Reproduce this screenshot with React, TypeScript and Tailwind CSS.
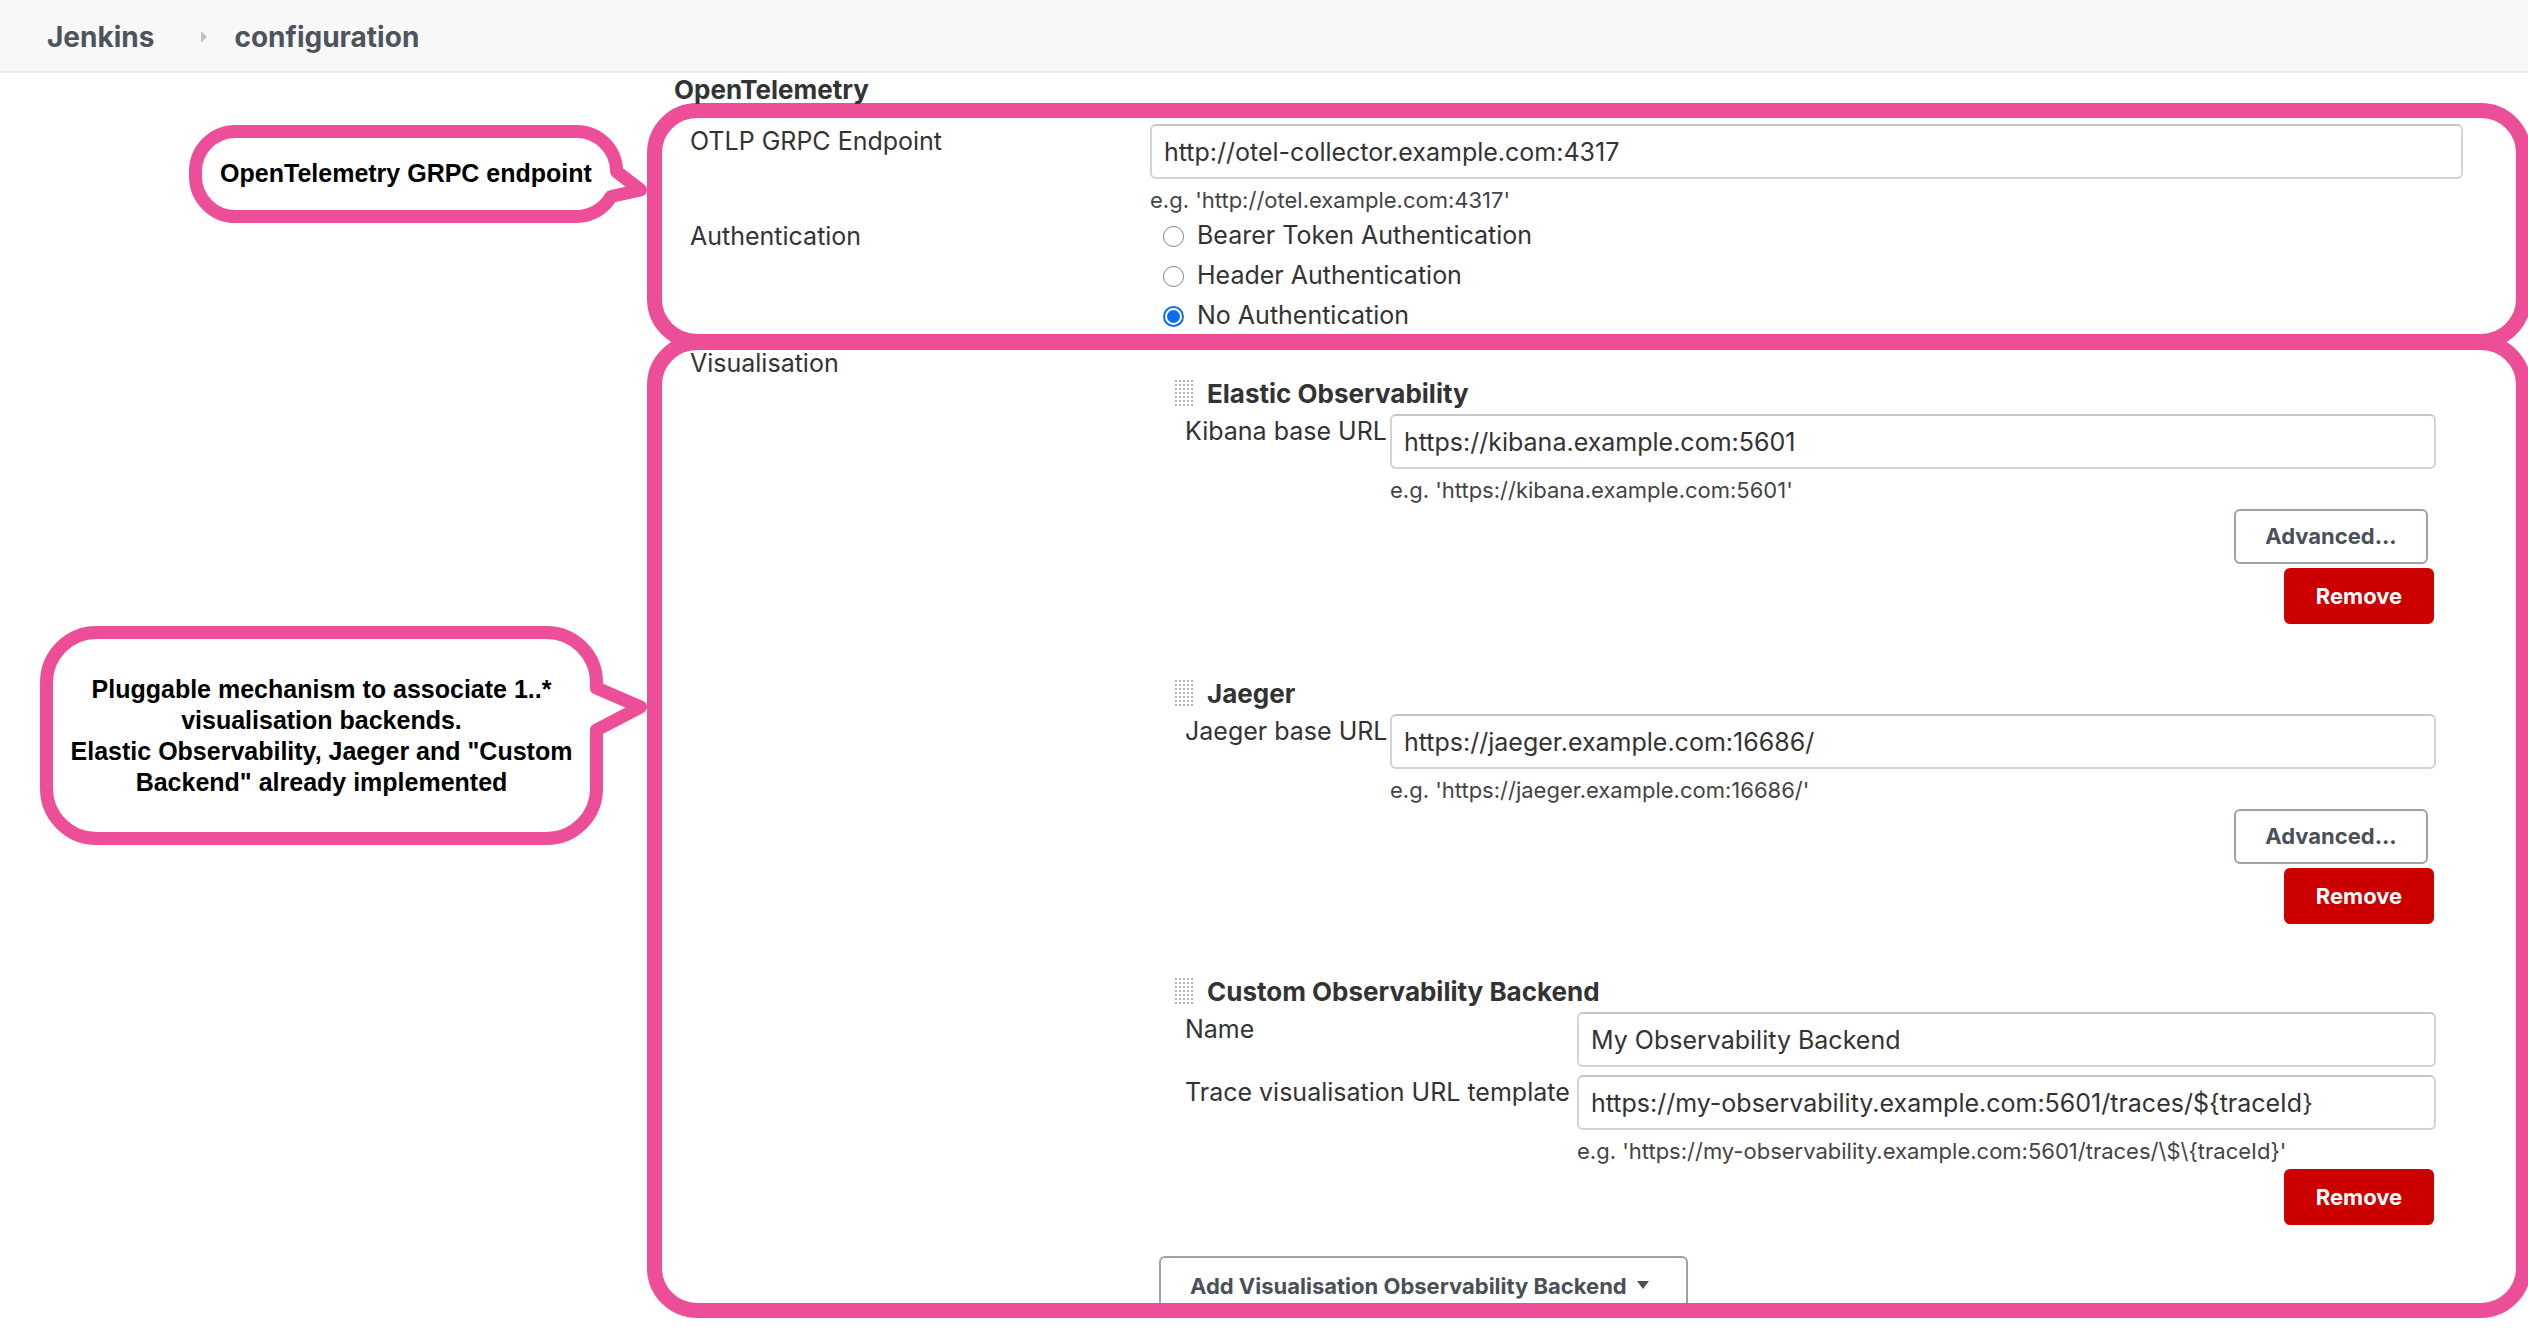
import React from "react";

const ui = { fontFamily: "Inter, 'Liberation Sans', sans-serif" };
const callFont = { fontFamily: "'Liberation Sans', Arial, sans-serif" };

function DragHandle() {
  return (
    <svg width="19" height="29" viewBox="0 0 19 29" className="shrink-0">
      <defs>
        <pattern id="dots" width="4" height="4" patternUnits="userSpaceOnUse">
          <rect x="1" y="1" width="2" height="2" fill="#b3b3b3" />
        </pattern>
      </defs>
      <rect x="0" y="0" width="19" height="29" fill="url(#dots)" />
    </svg>
  );
}

function Field({ value }: { value: string }) {
  return (
    <input
      readOnly
      value={value}
      className="h-[55px] w-full rounded-[6px] border-2 border-[#d3d3d3] border-t-[#c6c6c6] bg-white px-[12px] text-[25px] text-[#333] outline-none"
      style={ui}
    />
  );
}

function Radio({ label, checked }: { label: string; checked?: boolean }) {
  return (
    <div className="flex h-[40px] items-center gap-[13px] pl-[13px]">
      {checked ? (
        <span className="flex h-[21px] w-[21px] items-center justify-center rounded-full bg-[#0b6df2]">
          <span className="h-[17px] w-[17px] rounded-full border-2 border-white bg-[#0b6df2]" />
        </span>
      ) : (
        <span className="h-[21px] w-[21px] rounded-full border-[1.5px] border-[#7f7f7f] bg-white" />
      )}
      <span className="text-[25px] text-[#333]">{label}</span>
    </div>
  );
}

function AdvancedButton() {
  return (
    <button className="mr-[8px] mt-[5px] h-[55px] w-[194px] rounded-[6px] border-2 border-[#9aa3ab] bg-white text-[22px] font-bold text-[#4a5058]">
      Advanced...
    </button>
  );
}

function RemoveButton({ className }: { className: string }) {
  return (
    <button className={`mr-[2px] h-[56px] w-[150px] rounded-[6px] bg-[#cc0000] text-[22px] font-bold text-white ${className}`}>
      Remove
    </button>
  );
}

function Section({
  title,
  rows,
  help,
  labelW,
  advanced,
  className,
}: {
  title: string;
  rows: { label: string; value: string }[];
  help: string;
  labelW: string;
  advanced?: boolean;
  className: string;
}) {
  return (
    <div className={`ml-[24px] flex flex-col ${className}`}>
      <div className="flex h-[32px] items-center gap-[14px]">
        <DragHandle />
        <span className="text-[26px] font-bold text-[#333]">{title}</span>
      </div>
      <div className="mt-[5px] flex flex-col gap-[8px]">
        {rows.map((r) => (
          <div key={r.label} className="flex">
            <div className={`${labelW} shrink-0 whitespace-nowrap pl-[11px] pt-[1px] text-[25px] leading-[32px] text-[#333]`}>
              {r.label}
            </div>
            <Field value={r.value} />
          </div>
        ))}
      </div>
      <div className="flex">
        <div className={`${labelW} shrink-0`} />
        <div className="mt-[7px] text-[22px] leading-[28px] text-[#444]">{help}</div>
      </div>
      <div className="flex flex-col items-end">
        {advanced && <AdvancedButton />}
        <RemoveButton className={advanced ? "mt-[4px]" : "mt-[4px]"} />
      </div>
    </div>
  );
}

function Bubble1() {
  return (
    <div className="relative h-[98px] w-[458px]">
      <svg width="458" height="98" className="absolute inset-0">
        <path
          d="M46.5 6.5 H387.5 A40 40 0 0 1 427.5 46.5 L451.5 65 L422.1 71.5 A40 40 0 0 1 387.5 91.5 H46.5 A40 40 0 0 1 6.5 51.5 V46.5 A40 40 0 0 1 46.5 6.5 Z"
          fill="white"
          stroke="#ec4f97"
          strokeWidth="13"
          strokeLinejoin="round"
        />
      </svg>
      <div className="relative flex h-full w-[434px] items-center justify-center text-[25px] font-bold text-black" style={callFont}>
        OpenTelemetry GRPC endpoint
      </div>
    </div>
  );
}

function Bubble2() {
  return (
    <div className="relative h-[219px] w-[607px]">
      <svg width="607" height="219" className="absolute inset-0">
        <path
          d="M56.5 6.5 H506.5 A50 50 0 0 1 556.5 56.5 V62 L600.5 81 L556.5 104 V162.5 A50 50 0 0 1 506.5 212.5 H56.5 A50 50 0 0 1 6.5 162.5 V56.5 A50 50 0 0 1 56.5 6.5 Z"
          fill="white"
          stroke="#ec4f97"
          strokeWidth="13"
          strokeLinejoin="round"
        />
      </svg>
      <div
        className="relative flex h-full w-[563px] items-center justify-center text-center text-[25px] font-bold leading-[31px] text-black"
        style={callFont}
      >
        <p>
          Pluggable mechanism to associate 1..*
          <br />
          visualisation backends.
          <br />
          Elastic Observability, Jaeger and "Custom
          <br />
          Backend" already implemented
        </p>
      </div>
    </div>
  );
}

export default function App() {
  return (
    <div className="h-[1332px] w-[2528px] overflow-hidden bg-white" style={ui}>
      <header className="flex h-[73px] items-center border-b-2 border-[#e8eaed] bg-[#f8f8f8] pl-[47px] pt-[2px] text-[28px] font-bold text-[#4e545c]">
        <span>Jenkins</span>
        <svg width="8" height="14" viewBox="0 0 8 14" className="ml-[46px] mr-[26px]">
          <path d="M1 1 L7 7 L1 13 Z" fill="#c2c2c2" />
        </svg>
        <span>configuration</span>
      </header>

      <div className="flex">
        <div className="flex w-[647px] shrink-0 flex-col">
          <div className="ml-[189px] mt-[52px]">
            <Bubble1 />
          </div>
          <div className="ml-[40px] mt-[403px]">
            <Bubble2 />
          </div>
        </div>

        <div className="w-[1884px] shrink-0">
          <div className="h-[30px] pl-[27px] pt-[2px] text-[26px] font-bold leading-[30px] text-[#333]">OpenTelemetry</div>

          <div className="h-[246px] rounded-[50px] border-[15px] border-[#ec4f97]">
            <div className="grid grid-cols-[460px_1313px] pl-[28px] pt-[6px]">
              <div className="pt-[1px] text-[25px] leading-[32px] text-[#333]">OTLP GRPC Endpoint</div>
              <div className="flex flex-col">
                <Field value="http://otel-collector.example.com:4317" />
                <div className="mt-[7px] text-[22px] leading-[28px] text-[#444]">e.g. 'http://otel.example.com:4317'</div>
              </div>
              <div className="pt-[6px] text-[25px] leading-[32px] text-[#333]">Authentication</div>
              <div className="flex flex-col pt-[2px]">
                <Radio label="Bearer Token Authentication" />
                <Radio label="Header Authentication" />
                <Radio label="No Authentication" checked />
              </div>
            </div>
          </div>

          <div className="-mt-[14px] h-[983px] overflow-hidden rounded-[50px] border-[15px] border-[#ec4f97]">
            <div className="grid grid-cols-[460px_1286px] pl-[28px]">
              <div className="text-[25px] leading-[26px] text-[#333]">Visualisation</div>
              <div className="flex flex-col">
                <Section
                  className="mt-[27px]"
                  title="Elastic Observability"
                  labelW="w-[216px]"
                  rows={[{ label: "Kibana base URL", value: "https://kibana.example.com:5601" }]}
                  help="e.g. 'https://kibana.example.com:5601'"
                  advanced
                />
                <Section
                  className="mt-[53px]"
                  title="Jaeger"
                  labelW="w-[216px]"
                  rows={[{ label: "Jaeger base URL", value: "https://jaeger.example.com:16686/" }]}
                  help="e.g. 'https://jaeger.example.com:16686/'"
                  advanced
                />
                <Section
                  className="mt-[51px]"
                  title="Custom Observability Backend"
                  labelW="w-[403px]"
                  rows={[
                    { label: "Name", value: "My Observability Backend" },
                    { label: "Trace visualisation URL template", value: "https://my-observability.example.com:5601/traces/${traceId}" },
                  ]}
                  help="e.g. 'https://my-observability.example.com:5601/traces/\$\{traceId}'"
                />
                <button className="ml-[9px] mt-[31px] flex h-[70px] w-[529px] items-start justify-start rounded-t-[6px] border-2 border-[#9aa3ab] bg-white pl-[29px] pt-[12px] text-[22px] font-bold text-[#4a5058]">
                  Add Visualisation Observability Backend
                  <svg width="12" height="8" viewBox="0 0 12 8" className="ml-[10px] mt-[11px]">
                    <path d="M0 0 H12 L6 8 Z" fill="#4a5058" />
                  </svg>
                </button>
              </div>
            </div>
          </div>
        </div>
      </div>
    </div>
  );
}
